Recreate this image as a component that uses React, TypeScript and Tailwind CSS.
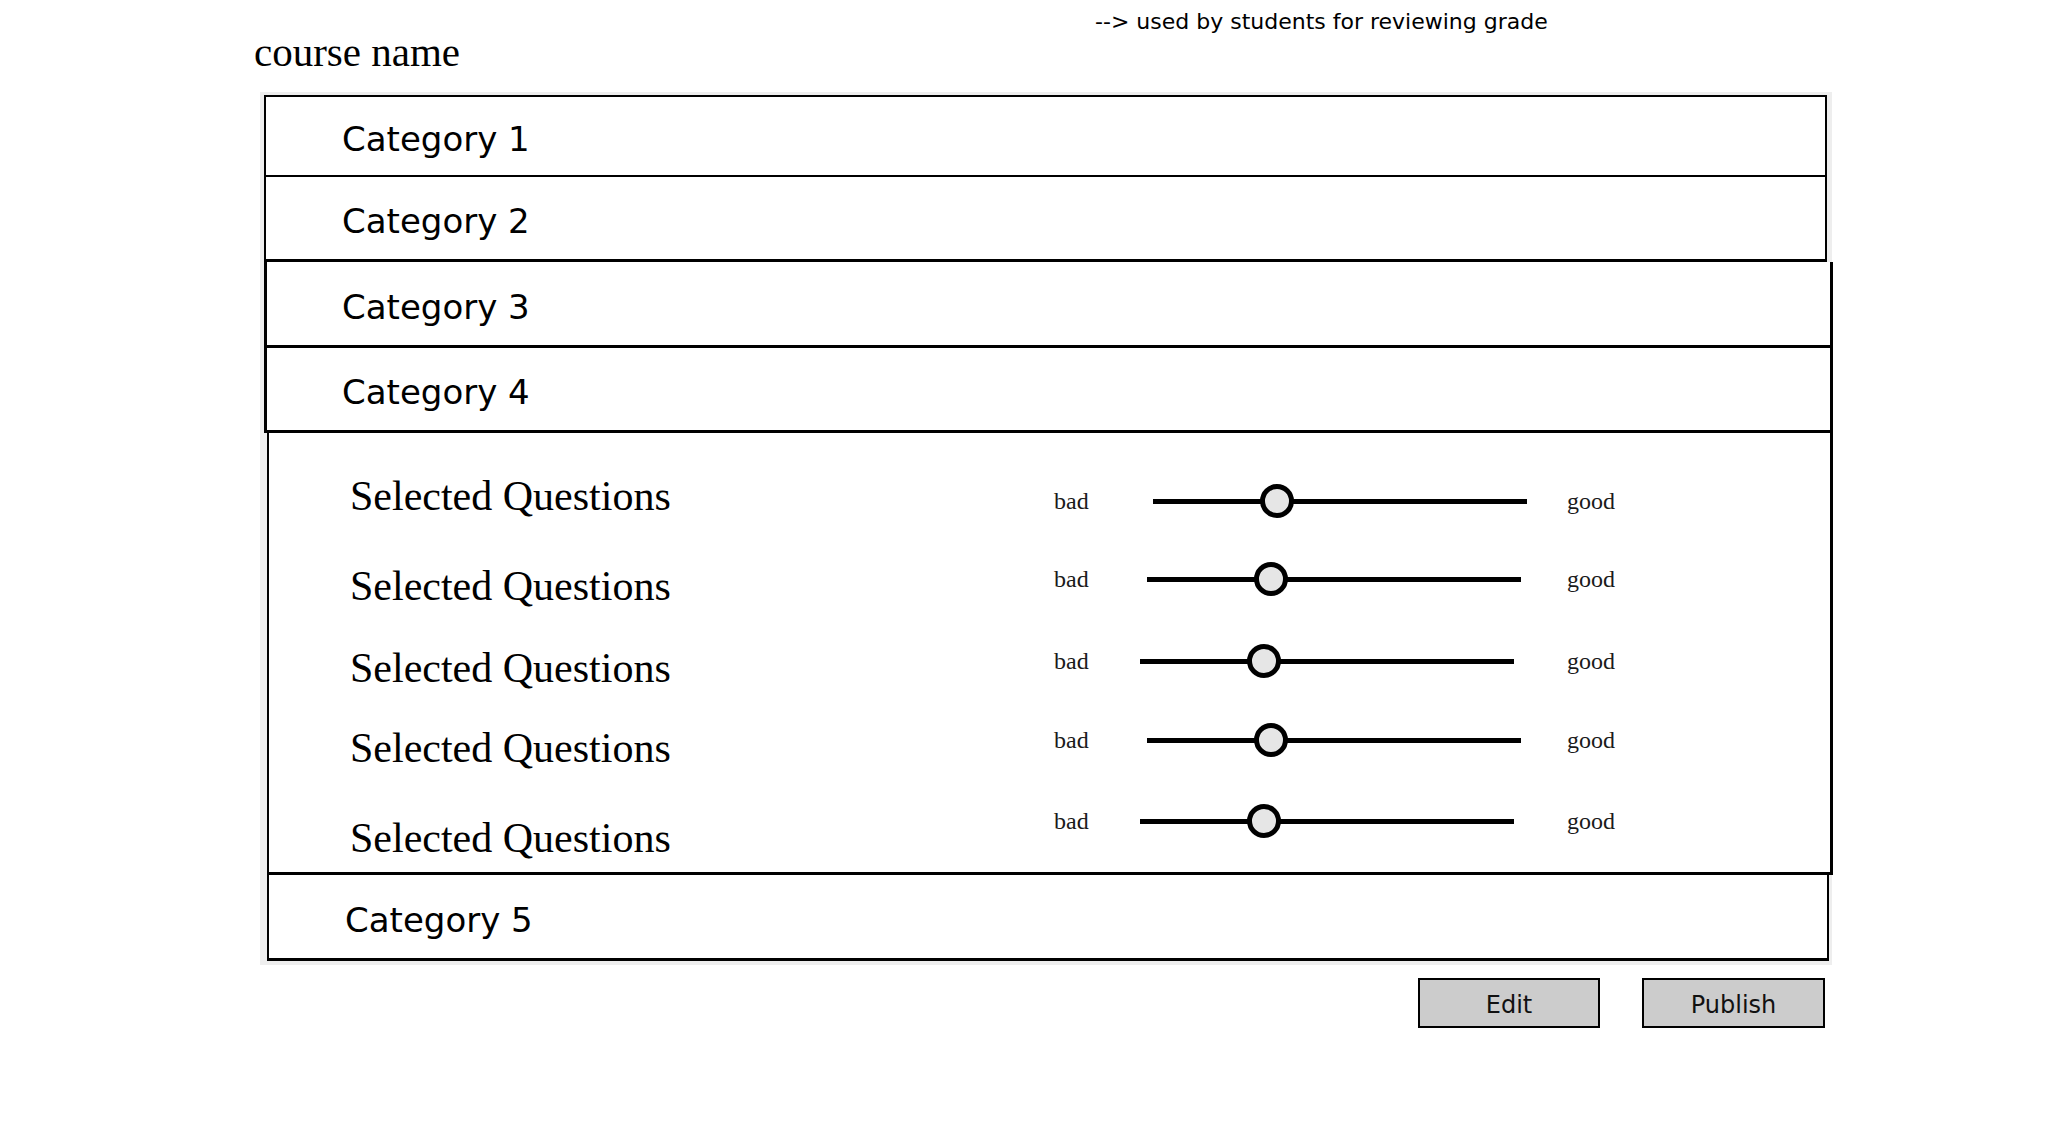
const questions = [
  { mt: 'mt-0' },
  { mt: 'mt-[48px]' },
  { mt: 'mt-[40px]' },
  { mt: 'mt-[38px]' },
  { mt: 'mt-[48px]' },
];

const sliders = [
  { mt: 'mt-0', shift: 'ml-[13px]' },
  { mt: 'mt-[38px]', shift: 'ml-[7px]' },
  { mt: 'mt-[42px]', shift: 'ml-0' },
  { mt: 'mt-[39px]', shift: 'ml-[7px]' },
  { mt: 'mt-[41px]', shift: 'ml-0' },
];

const sketch = "font-['DejaVu_Sans',sans-serif]";
const serif = "font-['Liberation_Serif',serif]";

function CategoryRow({ label, className }: { label: string; className: string }) {
  return (
    <div className={`flex items-center bg-white border-black pt-[6px] ${className}`}>
      <span className={`${sketch} text-[34px] leading-none text-black`}>{label}</span>
    </div>
  );
}

function Slider({ shift }: { shift: string }) {
  return (
    <div className="flex items-center h-[40px]">
      <span className={`${serif} text-[24px] leading-none text-[#1a1a1a] w-[86px]`}>bad</span>
      <div className="w-[427px]">
        <div className={`relative h-[5px] w-[374px] bg-black ${shift}`}>
          <div className="absolute left-[107px] top-1/2 -translate-y-1/2 w-[34px] h-[34px] rounded-full border-[5px] border-black bg-[#e6e6e6]" />
        </div>
      </div>
      <span className={`${serif} text-[24px] leading-none text-[#1a1a1a]`}>good</span>
    </div>
  );
}

export default function App() {
  return (
    <div className="w-[2072px] h-[1126px] bg-white overflow-hidden">
      <div className="h-[92px] pl-[254px] grid grid-cols-[841px_1fr] items-start">
        <span className={`${serif} text-[41px] leading-none text-black pt-[32px]`}>course name</span>
        <span className={`${sketch} text-[22px] leading-none text-black pt-[11px]`}>
          {'--> used by students for reviewing grade'}
        </span>
      </div>

      <div className="ml-[260px] w-[1572px] bg-[#eeeeee] pt-[3px] pb-[4px] pl-[4px] pr-[5px]">
        <CategoryRow label="Category 1" className="h-[82px] border-2 pl-[76px]" />
        <CategoryRow label="Category 2" className="h-[85px] border-x-2 border-b-[3px] pl-[76px]" />
        <CategoryRow label="Category 3" className="h-[86px] border-x-[3px] border-b-[3px] pl-[75px] -mr-[6px]" />
        <CategoryRow label="Category 4" className="h-[85px] border-x-[3px] border-b-[3px] pl-[75px] -mr-[6px]" />

        <div className="h-[442px] bg-white border-l-2 border-r-[3px] border-b-[3px] border-black ml-[3px] -mr-[6px] pl-[81px] grid grid-cols-[704px_1fr]">
          <div className="flex flex-col pt-[42px]">
            {questions.map((q, i) => (
              <span key={i} className={`${serif} text-[42px] leading-none text-black ${q.mt}`}>
                Selected Questions
              </span>
            ))}
          </div>
          <div className="flex flex-col pt-[48px]">
            {sliders.map((s, i) => (
              <div key={i} className={s.mt}>
                <Slider shift={s.shift} />
              </div>
            ))}
          </div>
        </div>

        <CategoryRow label="Category 5" className="h-[86px] border-x-2 border-b-[3px] pl-[76px] ml-[3px] -mr-[2px]" />
      </div>

      <div className="mt-[13px] ml-[1418px] flex gap-[42px]">
        <button className={`w-[182px] h-[50px] border-2 border-black bg-[#cccccc] pt-[4px] ${sketch} text-[24px] leading-none text-[#111]`}>
          Edit
        </button>
        <button className={`w-[183px] h-[50px] border-2 border-black bg-[#cccccc] pt-[4px] ${sketch} text-[24px] leading-none text-[#111]`}>
          Publish
        </button>
      </div>
    </div>
  );
}
